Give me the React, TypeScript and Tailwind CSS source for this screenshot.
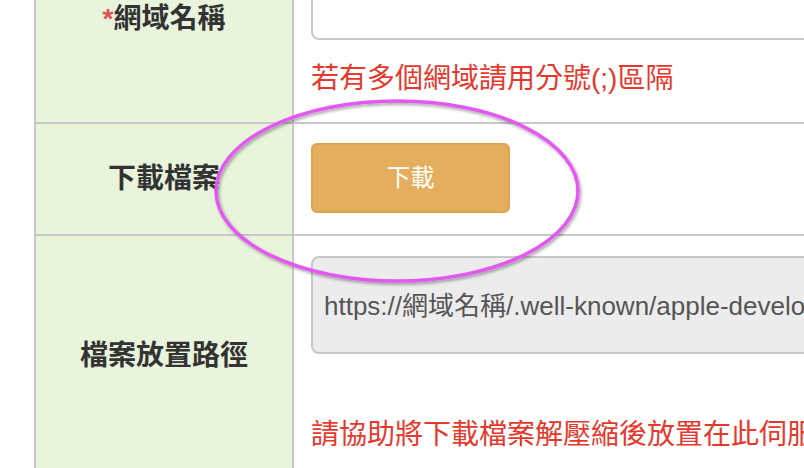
import type { ReactNode } from "react";

const Row = ({
  label,
  children,
  className,
}: {
  label: ReactNode;
  children: ReactNode;
  className: string;
}) => {
  return (
    <div className="grid grid-cols-[258px_1fr] border-b-2 border-[#c8c8c8]">
      <div className="flex items-center justify-center bg-[#e8f4dc] border-r-2 border-[#c8c8c8] text-[28px] leading-[42px] font-bold text-[#333]">
        {label}
      </div>
      <div className={className}>{children}</div>
    </div>
  );
};

export default function App() {
  return (
    <div className="relative w-[804px] h-[468px] overflow-hidden bg-white font-['Liberation_Sans','Noto_Sans_CJK_TC',sans-serif]">
      <div className="-mt-[84px] ml-[34px] w-[1100px] border-l-2 border-[#c8c8c8]">
        <Row
          label={
            <span>
              <span className="text-[#d9534f]">*</span>網域名稱
            </span>
          }
          className="pl-[17px] pt-[60px] pb-[22px]"
        >
          <div className="h-[64px] w-[760px] rounded-[8px] border-2 border-[#c8c8c8] bg-white" />
          <p className="mt-[18px] text-[28px] leading-[42px] text-[#e5392d] whitespace-nowrap">
            若有多個網域請用分號(;)區隔
          </p>
        </Row>

        <Row label="下載檔案" className="pl-[17px] pt-[19px] pb-[21px]">
          <button className="flex h-[70px] w-[199px] items-center justify-center rounded-[6px] border-2 border-[#dea34f] bg-[#e4ae5e] text-[24px] text-white">
            下載
          </button>
        </Row>

        <Row label="檔案放置路徑" className="pl-[17px] pt-[20px] pb-[20px]">
          <div className="flex h-[98px] w-[760px] items-center rounded-[8px] border-2 border-[#c8c8c8] bg-[#ececec] pl-[11px] pt-[3px] text-[26px] text-[#555] whitespace-nowrap overflow-hidden">
            https://網域名稱/.well-known/apple-developer-domain-association.txt
          </div>
          <p className="mt-[60px] text-[28px] leading-[42px] text-[#e5392d] whitespace-nowrap">
            請協助將下載檔案解壓縮後放置在此伺服器路徑
          </p>
        </Row>
      </div>

      <svg
        className="pointer-events-none absolute inset-0"
        width="804"
        height="468"
        viewBox="0 0 804 468"
      >
        <defs>
          <filter id="shadow" x="-10%" y="-10%" width="120%" height="130%">
            <feDropShadow dx="1.5" dy="2" stdDeviation="1.5" floodColor="#000" floodOpacity="0.35" />
          </filter>
        </defs>
        <ellipse
          cx="397"
          cy="191"
          rx="181"
          ry="90"
          fill="none"
          stroke="#e459f2"
          strokeWidth="3.5"
          filter="url(#shadow)"
        />
      </svg>
    </div>
  );
}
